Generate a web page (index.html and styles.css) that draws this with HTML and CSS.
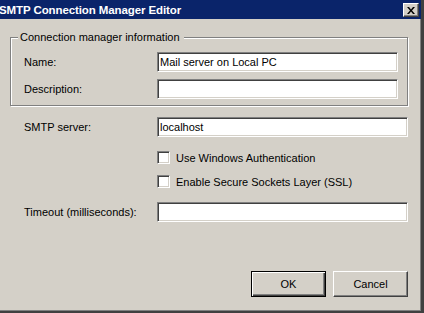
FILE: index.html
```html
<!DOCTYPE html>
<html>
<head>
    <link rel="stylesheet" href="styles.css">
</head>
<body>
    <div class="window">
        <div class="titlebar">
            <span class="title">SMTP Connection Manager Editor</span>
            <button class="close-btn">
                <svg width="8" height="7" viewBox="0 0 8 7">
                    <path d="M0 0h2l2 2.5L6 0h2L5 3.5 8 7H6L4 4.5 2 7H0l3-3.5z" fill="#000"/>
                </svg>
            </button>
        </div>
        <div class="content">
            <fieldset class="group">
                <legend>Connection manager information</legend>
                <div class="row">
                    <label>Name:</label>
                    <input class="field" type="text" value="Mail server on Local PC">
                </div>
                <div class="row">
                    <label>Description:</label>
                    <input class="field" type="text" value="">
                </div>
            </fieldset>

            <div class="row outer smtp">
                <label>SMTP server:</label>
                <input class="field" type="text" value="localhost">
            </div>

            <div class="check first">
                <span class="box"></span>
                <span>Use Windows Authentication</span>
            </div>
            <div class="check">
                <span class="box"></span>
                <span>Enable Secure Sockets Layer (SSL)</span>
            </div>

            <div class="row outer timeout">
                <label>Timeout (milliseconds):</label>
                <input class="field" type="text" value="">
            </div>

            <div class="buttons">
                <button class="btn default">OK</button>
                <button class="btn">Cancel</button>
            </div>
        </div>
    </div>
</body>
</html>
```

FILE: styles.css
```css
body {
    margin: 0;
    background: #d4d0c8;
    font-family: "Liberation Sans", Arial, sans-serif;
    font-size: 11px;
    color: #000;
    overflow: hidden;
}

.window {
    width: 424px;
    height: 313px;
    box-sizing: border-box;
    border-right: 3px solid #404040;
    border-bottom: 2px solid #404040;
    box-shadow: inset -1px -1px 0 #808080;
    display: flex;
    flex-direction: column;
}

/* Title bar */
.titlebar {
    height: 19px;
    flex: none;
    background: #0a246a;
    display: flex;
    align-items: center;
    justify-content: space-between;
    padding-right: 2px;
}
.title {
    color: #fff;
    font-weight: bold;
    font-size: 11.5px;
    margin-left: -1px;
    letter-spacing: -0.1px;
}
.close-btn {
    width: 16px;
    height: 14px;
    padding: 0;
    margin-top: 1px;
    background: #d4d0c8;
    border: 1px solid;
    border-color: #fff #404040 #404040 #fff;
    box-shadow: inset -1px -1px 0 #808080;
    display: flex;
    align-items: center;
    justify-content: center;
}

.content {
    padding: 12px 13px 0 10px;
    display: flex;
    flex-direction: column;
}

/* Group box */
.group {
    margin: 0;
    padding: 8px 9px 6px 13px;
    border: 1px solid #808080;
    box-shadow: inset 1px 1px 0 #fff, 1px 1px 0 #fff;
    min-width: 0;
}
.group legend {
    margin-left: -6px;
    padding: 0 4px 0 2px;
    background: #d4d0c8;
    line-height: 13px;
}

.row {
    display: grid;
    grid-template-columns: 133px 1fr;
    align-items: center;
}
.row + .row {
    margin-top: 7px;
}
.row label {
    padding-bottom: 1px;
}
.outer {
    padding-left: 14px;
}
.smtp {
    margin-top: 11px;
}
.timeout {
    margin-top: 14px;
}

.field {
    height: 20px;
    box-sizing: border-box;
    margin: 0;
    padding: 0 2px;
    font: inherit;
    color: #000;
    background: #fff;
    border: 1px solid;
    border-color: #808080 #fff #fff #808080;
    box-shadow: inset 1px 1px 0 #404040, inset -1px -1px 0 #d4d0c8;
    outline: none;
    min-width: 0;
}

/* Checkboxes */
.check {
    display: flex;
    align-items: center;
    gap: 6px;
    padding-left: 147px;
    margin-top: 11px;
    height: 13px;
}
.check.first {
    margin-top: 14px;
}
.box {
    width: 13px;
    height: 13px;
    box-sizing: border-box;
    flex: none;
    background: #fff;
    border: 1px solid;
    border-color: #808080 #fff #fff #808080;
    box-shadow: inset 1px 1px 0 #404040, inset -1px -1px 0 #d4d0c8;
}

/* Buttons */
.buttons {
    display: flex;
    justify-content: flex-end;
    gap: 7px;
    margin-top: 49px;
}
.btn {
    width: 75px;
    height: 26px;
    margin: 0;
    padding: 0;
    font: inherit;
    color: #000;
    background: #d4d0c8;
    border: 1px solid;
    border-color: #fff #404040 #404040 #fff;
    box-shadow: inset -1px -1px 0 #808080;
}
.btn.default {
    border-color: #000;
    box-shadow: inset 1px 1px 0 #fff, inset -1px -1px 0 #404040, inset -2px -2px 0 #808080;
}
```
